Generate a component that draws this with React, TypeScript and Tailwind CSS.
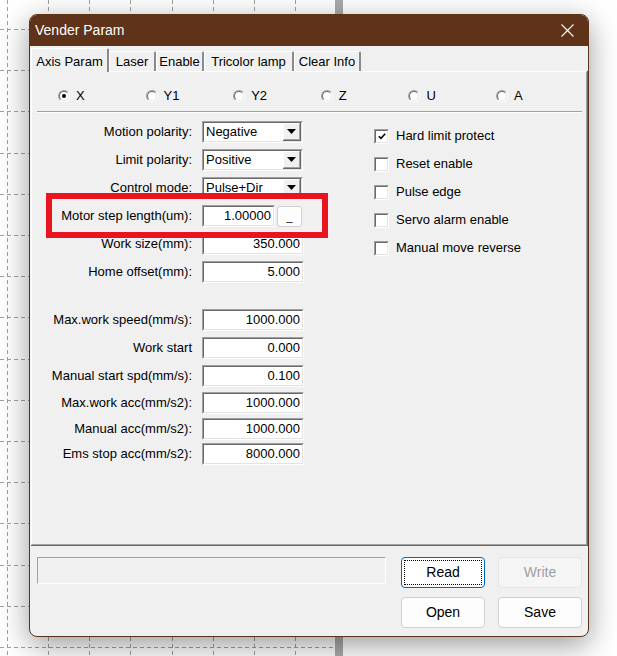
import React from 'react';

/**
 * VenderParam - classic Win32 style "Vender Param" dialog on a dashed canvas
 */

const FONT = "font-['Liberation_Sans',Arial,sans-serif]";

const motionRows = [
  { label: 'Max.work speed(mm/s):', value: '1000.000', gap: 'mt-0' },
  { label: 'Work start', value: '0.000', gap: 'mt-[6px]' },
  { label: 'Manual start spd(mm/s):', value: '0.100', gap: 'mt-[6px]' },
  { label: 'Max.work acc(mm/s2):', value: '1000.000', gap: 'mt-[5px]' },
  { label: 'Manual acc(mm/s2):', value: '1000.000', gap: 'mt-[4px]' },
  { label: 'Ems stop acc(mm/s2):', value: '8000.000', gap: 'mt-[3px]' },
];

const checks = [
  { label: 'Hard limit protect', checked: true },
  { label: 'Reset enable', checked: false },
  { label: 'Pulse edge', checked: false },
  { label: 'Servo alarm enable', checked: false },
  { label: 'Manual move reverse', checked: false },
];

const axes = ['X', 'Y1', 'Y2', 'Z', 'U', 'A'];

const tabs = [
  { label: 'Axis Param', width: 'w-[78px]' },
  { label: 'Laser', width: 'w-[47px]' },
  { label: 'Enable', width: 'w-[48px]' },
  { label: 'Tricolor lamp', width: 'w-[90px]' },
  { label: 'Clear Info', width: 'w-[67px]' },
];

export default function App() {
  return (
    <div className={`relative w-[617px] h-[656px] overflow-hidden bg-white pt-[14px] pl-[29px] ${FONT}`}>
      <CanvasGrid />
      <div className="absolute left-[335px] top-0 w-[8px] h-full bg-[#ababab]" />

      {/* Dialog window */}
      <div className="relative z-10 w-[560px] h-[623px] rounded-[8px] border border-[#5c3218] overflow-hidden flex flex-col bg-[#f0f0f0] shadow-[0_8px_30px_rgba(0,0,0,0.4)]">
        {/* Title bar */}
        <div className="h-[31px] shrink-0 bg-[#5f3319] flex items-center justify-between pl-[5px]">
          <span className="text-[14px] text-white">Vender Param</span>
          <div className="w-[42px] h-full flex items-center justify-center">
            <svg width="13" height="13" viewBox="0 0 13 13">
              <path d="M0.5 0.5L12.5 12.5M12.5 0.5L0.5 12.5" stroke="#fff" strokeWidth="1.1" />
            </svg>
          </div>
        </div>

        {/* Tab strip */}
        <div className="h-[25px] shrink-0 flex items-end pl-[1px]">
          {tabs.map((t, i) =>
            i === 0 ? (
              <div
                key={t.label}
                className={`${t.width} relative z-10 h-[24px] -mb-px rounded-t-[2px] bg-[#f0f0f0] border-t border-l border-white border-r-2 border-r-[#8a8a8a] flex items-start pt-[3px] justify-center text-[13px] text-black`}
              >
                {t.label}
              </div>
            ) : (
              <div
                key={t.label}
                className={`${t.width} h-[20px] rounded-t-[2px] bg-[#f0f0f0] border-t border-l border-white border-r-2 border-r-[#8a8a8a] flex items-center justify-center text-[13px] text-black`}
              >
                {t.label}
              </div>
            )
          )}
        </div>

        {/* Tab panel */}
        <div className="ml-[1px] w-[557px] h-[475px] shrink-0 border-r border-b border-[#696969]">
          <div className="w-full h-full border-t border-l border-white border-r border-b border-r-[#a0a0a0] border-b-[#a0a0a0] flex flex-col">
            {/* Axis radios */}
            <div className="mt-[16px] h-[16px] pl-[26px] flex items-center">
              {axes.map((a, i) => (
                <div key={a} className="w-[87.6px] flex items-center gap-[6px] text-[13px] text-black">
                  <Radio checked={i === 0} />
                  <span>{a}</span>
                </div>
              ))}
            </div>
            <div className="mt-[7px] ml-[5px] mr-[4px] border-t border-b border-t-[#a0a0a0] border-b-white" />

            <div className="flex">
              {/* Left form */}
              <div className="flex flex-col mt-[8px]">
                <div className="flex flex-col gap-[6px]">
                  <FormRow label="Motion polarity:">
                    <Combo value="Negative" />
                  </FormRow>
                  <FormRow label="Limit polarity:">
                    <Combo value="Positive" />
                  </FormRow>
                  <FormRow label="Control mode:">
                    <Combo value="Pulse+Dir" />
                  </FormRow>
                  <FormRow label="Motor step length(um):">
                    <Field value="1.00000" width="w-[73px]" />
                    <button className="ml-[2px] w-[25px] h-[21px] rounded-[3px] border border-[#d0d0d0] bg-[#fdfdfd] flex items-end justify-center pb-[3px] text-[11px] leading-none text-black">
                      _
                    </button>
                  </FormRow>
                  <FormRow label="Work size(mm):">
                    <Field value="350.000" width="w-[102px]" />
                  </FormRow>
                  <FormRow label="Home offset(mm):">
                    <Field value="5.000" width="w-[102px]" />
                  </FormRow>
                </div>

                <div className="flex flex-col mt-[26px]">
                  {motionRows.map((r) => (
                    <div key={r.label} className={r.gap}>
                      <FormRow label={r.label}>
                        <Field value={r.value} width="w-[102px]" />
                      </FormRow>
                    </div>
                  ))}
                </div>
              </div>

              {/* Right checkboxes */}
              <div className="ml-[70px] mt-[15px] flex flex-col gap-[12px]">
                {checks.map((c) => (
                  <div key={c.label} className="h-[16px] flex items-center gap-[7px] text-[13px] text-black">
                    <CheckBox checked={c.checked} />
                    <span>{c.label}</span>
                  </div>
                ))}
              </div>
            </div>
          </div>
        </div>

        {/* Bottom bar */}
        <div className="flex-1 flex items-start pt-[11px] pl-[7px]">
          <div className="w-[349px] h-[27px] border border-t-[#a0a0a0] border-l-[#a0a0a0] border-b-white border-r-white" />
          <div className="ml-[15px] grid content-start grid-cols-[84px_84px] gap-x-[13px] gap-y-[9px]">
            <button className="h-[31px] rounded-[4px] border border-[#0067c0] bg-white p-[2px]">
              <span className="w-full h-full flex items-center justify-center border border-dotted border-black text-[14px] text-black">
                Read
              </span>
            </button>
            <button className="h-[31px] rounded-[4px] border border-[#e5e5e5] bg-[#f5f5f5] text-[14px] text-[#a0a0a0]">
              Write
            </button>
            <button className="h-[31px] rounded-[4px] border border-[#d0d0d0] bg-[#fdfdfd] text-[14px] text-black">
              Open
            </button>
            <button className="h-[31px] rounded-[4px] border border-[#d0d0d0] bg-[#fdfdfd] text-[14px] text-black">
              Save
            </button>
          </div>
        </div>
      </div>

      {/* Red highlight annotation */}
      <div className="absolute z-20 left-[46px] top-[193px] w-[282px] h-[45px] border-[6px] border-[#e8141f]" />
    </div>
  );
}

function CanvasGrid() {
  const xs = [7, 48, 89, 130, 172, 213, 254, 295];
  const ys = Array.from({ length: 16 }, (_, i) => Math.round(29 + i * 41.2));
  return (
    <svg className="absolute inset-0" width={617} height={656}>
      {xs.map((x) => (
        <line key={`v${x}`} x1={x + 0.5} y1={0} x2={x + 0.5} y2={656} stroke="#a39f94" strokeDasharray="4 3" />
      ))}
      {ys.map((y) => (
        <line key={`h${y}`} x1={0} y1={y + 0.5} x2={335} y2={y + 0.5} stroke="#a39f94" strokeDasharray="4 3" />
      ))}
    </svg>
  );
}

function FormRow({ label, children }: { label: string; children: React.ReactNode }) {
  return (
    <div className="h-[22px] flex items-center">
      <span className="w-[160px] mr-[10px] text-right text-[13px] text-black whitespace-nowrap">{label}</span>
      {children}
    </div>
  );
}

function Sunken({ className, children }: { className: string; children?: React.ReactNode }) {
  return (
    <div className={`border border-t-[#a0a0a0] border-l-[#a0a0a0] border-b-white border-r-white ${className}`}>
      <div className="w-full h-full flex items-center bg-white border border-t-[#696969] border-l-[#696969] border-b-[#e3e3e3] border-r-[#e3e3e3]">
        {children}
      </div>
    </div>
  );
}

function Field({ value, width }: { value: string; width: string }) {
  return (
    <Sunken className={`${width} h-[22px]`}>
      <span className="flex-1 text-right pr-[2px] text-[13px] text-black">{value}</span>
    </Sunken>
  );
}

function Combo({ value }: { value: string }) {
  return (
    <Sunken className="w-[101px] h-[22px]">
      <span className="flex-1 pl-[2px] text-[13px] text-black">{value}</span>
      <div className="w-[18px] h-full border-r border-b border-[#696969]">
        <div className="w-full h-full bg-[#f0f0f0] border-t border-l border-white border-r border-b border-r-[#a0a0a0] border-b-[#a0a0a0] flex items-center justify-center">
          <svg width="9" height="5" viewBox="0 0 9 5">
            <path d="M0 0H9L4.5 5Z" fill="#000" />
          </svg>
        </div>
      </div>
    </Sunken>
  );
}

function Radio({ checked }: { checked: boolean }) {
  return (
    <span className="w-[12px] h-[12px] rounded-full border border-t-[#a0a0a0] border-l-[#a0a0a0] border-b-white border-r-white">
      <span className="w-full h-full rounded-full bg-white border border-t-[#696969] border-l-[#696969] border-b-[#e3e3e3] border-r-[#e3e3e3] flex items-center justify-center">
        {checked && <span className="w-[4px] h-[4px] rounded-full bg-black" />}
      </span>
    </span>
  );
}

function CheckBox({ checked }: { checked: boolean }) {
  return (
    <span className="w-[15px] h-[15px] border border-t-[#a0a0a0] border-l-[#a0a0a0] border-b-white border-r-white">
      <span className="w-full h-full bg-white border border-t-[#696969] border-l-[#696969] border-b-[#e3e3e3] border-r-[#e3e3e3] flex items-center justify-center">
        {checked && (
          <svg width="8" height="7" viewBox="0 0 8 7">
            <path d="M0.8 3.2L3 5.4L7.2 0.8" stroke="#000" strokeWidth="1.6" fill="none" />
          </svg>
        )}
      </span>
    </span>
  );
}
